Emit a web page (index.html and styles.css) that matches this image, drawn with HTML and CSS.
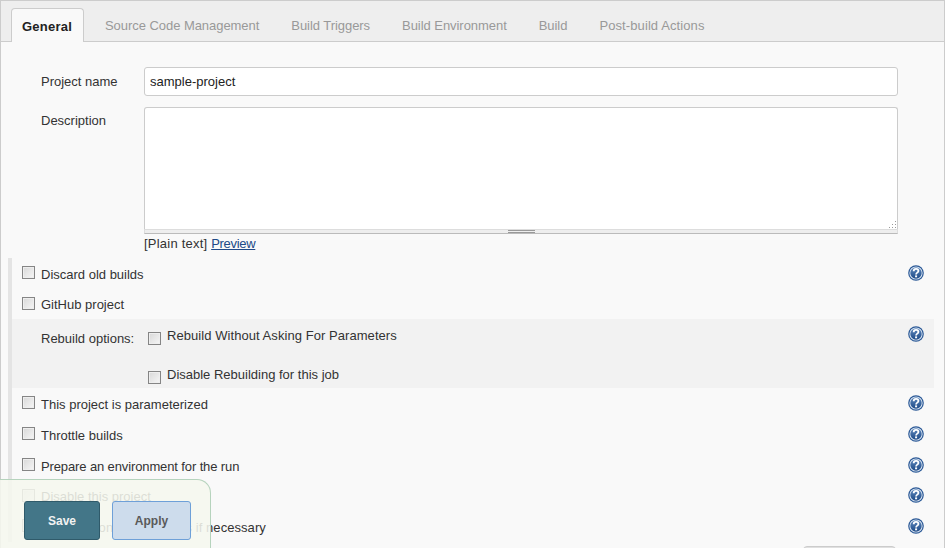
FILE: index.html
```html
<!DOCTYPE html>
<html lang="en">
<head>
<meta charset="utf-8">
<title>sample-project Config</title>
<link rel="stylesheet" href="styles.css">
</head>
<body>
<svg class="defs" width="0" height="0" aria-hidden="true">
  <defs>
    <linearGradient id="helpfill" x1="0" y1="0" x2="0" y2="1">
      <stop offset="0" stop-color="#6089bd"/>
      <stop offset="1" stop-color="#1d4a87"/>
    </linearGradient>
    <symbol id="help" viewBox="0 0 16 16">
      <circle cx="8" cy="8" r="7.8" fill="#2a5896"/>
      <circle cx="8" cy="8" r="6.6" fill="#dfe8f3"/>
      <circle cx="8" cy="8" r="5.7" fill="url(#helpfill)"/>
      <path d="M5.7 6.2c0-1.5 1.1-2.3 2.4-2.3s2.3.9 2.3 2c0 1.7-2.3 1.7-2.3 3.5" fill="none" stroke="#fff" stroke-width="1.8"/>
      <rect x="7.1" y="10.4" width="2" height="1.9" fill="#fff"/>
    </symbol>
  </defs>
</svg>
<main class="config">
  <nav class="tabs">
    <a class="tab tab-active">General</a>
    <a class="tab">Source Code Management</a>
    <a class="tab">Build Triggers</a>
    <a class="tab">Build Environment</a>
    <a class="tab">Build</a>
    <a class="tab tab-wide">Post-build Actions</a>
  </nav>
  <form class="form">
    <div class="field field-name">
      <label class="field-label">Project name</label>
      <input class="text-input" type="text" value="sample-project">
    </div>
    <div class="field field-desc">
      <label class="field-label">Description</label>
      <div class="field-body">
        <div class="textarea">
          <svg class="resizer" width="11" height="9" viewBox="0 0 11 9"><path d="M9 1h1v1H9zM6 4h1v1H6zM9 4h1v1H9zM3 7h1v1H3zM6 7h1v1H6zM9 7h1v1H9z" fill="#999"/></svg>
        </div>
        <div class="grippie"><span class="grip"></span></div>
        <div class="markup">[Plain text] <a class="link">Preview</a></div>
      </div>
    </div>
    <div class="options">
      <div class="row row-31">
        <input class="check" type="checkbox"><span class="row-text">Discard old builds</span>
        <svg class="help"><use href="#help"/></svg>
      </div>
      <div class="row row-30">
        <input class="check" type="checkbox"><span class="row-text">GitHub project</span>
      </div>
      <div class="rebuild">
        <span class="rebuild-label">Rebuild options:</span>
        <div class="rebuild-list">
          <div class="rebuild-item"><input class="check check-alt" type="checkbox"><span class="rebuild-text text-wide">Rebuild Without Asking For Parameters</span></div>
          <div class="rebuild-item"><input class="check check-alt" type="checkbox"><span class="rebuild-text">Disable Rebuilding for this job</span></div>
        </div>
        <svg class="help help-top"><use href="#help"/></svg>
      </div>
      <div class="row row-31">
        <input class="check" type="checkbox"><span class="row-text">This project is parameterized</span>
        <svg class="help"><use href="#help"/></svg>
      </div>
      <div class="row row-31">
        <input class="check" type="checkbox"><span class="row-text">Throttle builds</span>
        <svg class="help"><use href="#help"/></svg>
      </div>
      <div class="row row-31">
        <input class="check" type="checkbox"><span class="row-text text-tight">Prepare an environment for the run</span>
        <svg class="help"><use href="#help"/></svg>
      </div>
      <div class="row row-30">
        <input class="check" type="checkbox"><span class="row-text">Disable this project</span>
        <svg class="help"><use href="#help"/></svg>
      </div>
      <div class="row row-31">
        <input class="check" type="checkbox"><span class="row-text text-wide">Execute concurrent builds if necessary</span>
        <svg class="help"><use href="#help"/></svg>
      </div>
    </div>
    <div class="advanced-row"><button class="advanced" type="button"></button></div>
  </form>
</main>
<div class="bottom-bar">
  <button class="btn btn-save" type="button">Save</button>
  <button class="btn btn-apply" type="button">Apply</button>
</div>
</body>
</html>
```
FILE: styles.css
```css
html, body {
  margin: 0;
  height: 548px;
  overflow: hidden;
  background: #fff;
}
body {
  position: relative;
  font-family: "Liberation Sans", Arial, sans-serif;
  font-size: 13px;
  line-height: 16px;
  color: #333;
}
.defs { position: absolute; }
.config {
  width: 943px;
  height: 547px;
  overflow: hidden;
  border: 1px solid #ccc;
  border-bottom: 0;
  background: #f9f9f9;
}
.tabs {
  display: flex;
  height: 41px;
  box-sizing: border-box;
  padding: 7px 0 0 10px;
  background: #eee;
  border-bottom: 1px solid #ccc;
}
.tab {
  height: 33px;
  box-sizing: border-box;
  padding: 10px 10px 0 22px;
  color: #999;
  white-space: nowrap;
  letter-spacing: -0.05px;
}
.tab-wide { letter-spacing: 0.1px; }
.tab-active {
  width: 73px;
  padding: 10px 0 0 10px;
  background: #f9f9f9;
  color: #222;
  font-weight: bold;
  letter-spacing: 0.25px;
  border: 1px solid #ccc;
  border-bottom: 0;
  border-radius: 4px 4px 0 0;
  margin-right: -1px;
  height: 34px;
}
.form { padding-top: 25px; }
.field {
  display: flex;
}
.field-label {
  width: 103px;
  margin-left: 40px;
  flex: none;
}
.field-name { height: 29px; margin-bottom: 11px; }
.field-name .field-label { padding-top: 7px; }
.field-desc { height: 151px; }
.field-desc .field-label { padding-top: 6px; }
.text-input {
  width: 754px;
  height: 29px;
  box-sizing: border-box;
  padding: 0 5px;
  margin: 0;
  border: 1px solid #ccc;
  border-radius: 3px;
  background: #fff;
  font: 13px "Liberation Sans", Arial, sans-serif;
  color: #222;
}
.field-body { width: 754px; }
.textarea {
  height: 122px;
  box-sizing: border-box;
  border: 1px solid #ccc;
  border-bottom: 0;
  border-radius: 3px 3px 0 0;
  background: #fff;
  display: flex;
  justify-content: flex-end;
  align-items: flex-end;
}
.resizer { display: block; }
.grippie {
  height: 5px;
  box-sizing: border-box;
  background: #eee;
  border: 1px solid #ddd;
  border-bottom: 1px solid #bbb;
  display: flex;
  justify-content: center;
}
.grip {
  width: 27px;
  height: 3px;
  border-top: 1px solid #999;
  border-bottom: 1px solid #999;
  box-sizing: border-box;
}
.markup {
  padding-top: 1px;
  height: 17px;
  color: #333;
  margin-top: 1px;
  letter-spacing: 0.22px;
}
.link {
  color: #204a87;
  text-decoration: underline;
  letter-spacing: -0.3px;
}
.options {
  margin: 0 0 0 7px;
  width: 922px;
  border-left: 4px solid #e4e4e4;
}
.row {
  display: flex;
  align-items: center;
  padding: 0 10px;
}
.row-30 { height: 30px; }
.row-31 { height: 31px; }
.check {
  appearance: none;
  -webkit-appearance: none;
  flex: none;
  width: 13px;
  height: 13px;
  box-sizing: border-box;
  margin: -2px 6px 0 0;
  border: 1px solid #858585;
  background: linear-gradient(135deg, #d8d8d8, #f6f6f6);
  box-shadow: inset 0 0 0 1px #eee;
}
.row-text { flex: 1; white-space: nowrap; padding-top: 2px; }
.text-tight { letter-spacing: -0.12px; }
.text-wide { letter-spacing: 0.06px; }
.help {
  flex: none;
  width: 16px;
  height: 16px;
  margin-top: -2px;
}
.rebuild {
  display: flex;
  height: 69px;
  box-sizing: border-box;
  padding: 0 10px 0 29px;
  background: #f2f2f2;
}
.rebuild-label {
  width: 107px;
  padding-top: 12px;
  flex: none;
}
.rebuild-list { flex: 1; }
.rebuild-item {
  display: flex;
  align-items: flex-start;
  height: 39px;
  padding-top: 9px;
  box-sizing: border-box;
}
.check-alt { margin: 4px 6px 0 0; }
.help-top { margin-top: 7px; }
.advanced-row {
  padding: 4px 0 0 802px;
}
.advanced {
  display: block;
  width: 93px;
  height: 30px;
  padding: 0;
  background: #e0e0e0;
  border: 1px solid #ccc;
  border-radius: 4px;
}
.bottom-bar {
  position: absolute;
  left: 0;
  top: 479px;
  width: 211px;
  height: 69px;
  box-sizing: border-box;
  padding: 21px 0 0 24px;
  display: flex;
  gap: 12px;
  background: rgba(245, 247, 238, 0.87);
  border: 1px solid #b6d3bd;
  border-left: 0;
  border-bottom: 0;
  border-radius: 0 14px 0 0;
}
.btn {
  height: 39px;
  box-sizing: border-box;
  padding: 0;
  font: bold 12px "Liberation Sans", Arial, sans-serif;
  border-radius: 3px;
}
.btn-save {
  width: 76px;
  background: #437688;
  border: 1px solid #2f5a6a;
  color: #f2f2f2;
}
.btn-apply {
  width: 79px;
  background: #cddcec;
  border: 1px solid #6ea0d8;
  color: #5a5a5a;
}
```
